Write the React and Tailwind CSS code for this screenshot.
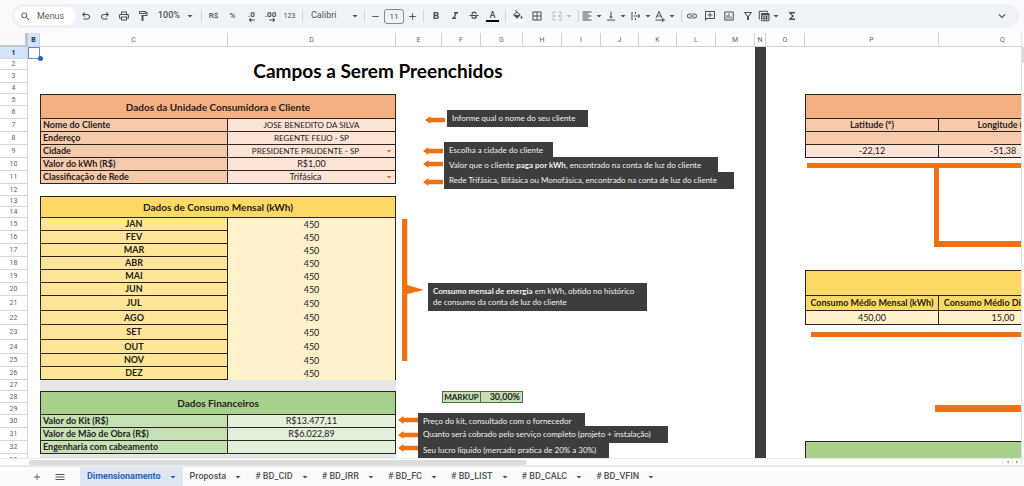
import React from 'react';
import {
  MdSearch, MdOutlinePrint, MdOutlineFormatPaint, MdFormatBold, MdFormatItalic, MdStrikethroughS,
  MdFormatColorFill, MdBorderAll, MdFormatAlignLeft, MdVerticalAlignBottom, MdLink,
  MdOutlineAddComment, MdInsertChartOutlined, MdOutlineFilterAlt, MdFunctions, MdArrowDropDown,
  MdKeyboardArrowDown, MdAdd, MdRemove, MdMenu,
} from 'react-icons/md';

/* ---------- toolbar ---------- */

function Tool({ label, className = 'w-[19px]', children }) {
  return (
    <button type="button" aria-label={label} className={`flex h-5 shrink-0 items-center justify-center ${className}`}>
      {children}
    </button>
  );
}

function Sep() {
  return <span className="flex w-1.5 shrink-0 justify-center"><span className="h-3 w-px bg-[#cfd3d9]" /></span>;
}

function Caret({ className = '' }) {
  return <MdArrowDropDown className={`size-3 shrink-0 ${className}`} />;
}

function UndoIcon({ className = '' }) {
  return (
    <svg viewBox="0 -960 960 960" fill="currentColor" className={`size-3 ${className}`}>
      <path d="M280-200v-80h284q63 0 109.500-40T720-420q0-60-46.500-100T564-560H312l104 104-56 56-200-200 200-200 56 56-104 104h252q97 0 169 63t72 157q0 94-72 157t-169 63H280Z" />
    </svg>
  );
}

function DecimalIcon({ digits, right }) {
  return (
    <span className="flex flex-col items-center">
      <span className="text-[8px] font-bold leading-[7px]">{digits}</span>
      <svg viewBox="0 0 10 6" className={`h-1 w-[7px] self-end ${right ? '-scale-x-100' : ''}`} fill="none" stroke="currentColor" strokeWidth="1.600">
        <path d="M10 3H2M4.500 .5 2 3l2.500 2.500" />
      </svg>
    </span>
  );
}

function MergeIcon() {
  return (
    <svg viewBox="0 0 24 24" className="size-3 shrink-0" fill="none" stroke="currentColor" strokeWidth="2">
      <path d="M9 4H4v4M15 4h5v4M9 20H4v-4M15 20h5v-4M2 12h6M22 12h-6" />
      <path d="m6 9 3 3-3 3M18 9l-3 3 3 3" />
    </svg>
  );
}

function OverflowIcon() {
  return (
    <svg viewBox="0 0 24 24" className="size-3 shrink-0" fill="none" stroke="currentColor" strokeWidth="2">
      <path d="M4 4v16M11 4v4M11 16v4M7 12h13M16 8l4 4-4 4" />
    </svg>
  );
}

function RotateIcon() {
  return (
    <svg viewBox="0 0 24 24" className="size-3 shrink-0" fill="none" stroke="currentColor" strokeWidth="2">
      <path d="M4 16 10 3l6 13M6 12h8M3 20h14M17 17v6l4-3z" />
    </svg>
  );
}

function TableViewsIcon() {
  return (
    <svg viewBox="0 0 24 24" className="size-3 shrink-0" fill="none" stroke="currentColor" strokeWidth="2">
      <path d="M4 18H2.500V2.500H19V5" />
      <path d="M7 7h15v14.500H7zM7 12h15M7 16.500h15M12 12v9.500M17 12v9.500" />
      <path d="M7 8.500h15" strokeWidth="3" />
    </svg>
  );
}

function Toolbar() {
  return (
    <div role="toolbar" className="mr-[5px] ml-3 flex h-6 items-center rounded-full bg-[#eff3f9] pr-2 pl-0.5 text-[9px] text-[#4d5054]">
      <label className="flex h-[18px] w-[62px] shrink-0 items-center gap-1.5 rounded-full bg-white pl-1.5">
        <MdSearch className="size-[11px] shrink-0" />
        <input aria-label="Menus" placeholder="Menus" className="w-9 bg-transparent leading-3 outline-none placeholder:text-[#5a5d61]" />
      </label>
      <Tool label="Desfazer"><UndoIcon /></Tool>
      <Tool label="Refazer"><UndoIcon className="-scale-x-100" /></Tool>
      <Tool label="Imprimir"><MdOutlinePrint className="size-3" /></Tool>
      <Tool label="Pintar formatação"><MdOutlineFormatPaint className="size-3" /></Tool>
      <Tool label="Zoom" className="w-[46px] gap-1 pl-1"><span className="font-medium">100%</span><Caret /></Tool>
      <Sep />
      <Tool label="Moeda"><span className="text-[8px] font-medium">R$</span></Tool>
      <Tool label="Porcentagem"><span className="text-[8px] font-medium">%</span></Tool>
      <Tool label="Diminuir casas decimais"><DecimalIcon digits=".0" /></Tool>
      <Tool label="Aumentar casas decimais"><DecimalIcon digits=".00" right /></Tool>
      <Tool label="Mais formatos"><span className="text-[7px]">123</span></Tool>
      <Sep />
      <Tool label="Fonte" className="w-14 justify-between! pl-1.5"><span>Calibri</span><Caret /></Tool>
      <Sep />
      <Tool label="Diminuir tamanho da fonte" className="w-[17px]"><MdRemove className="size-[11px]" /></Tool>
      <input aria-label="Tamanho da fonte" defaultValue="11" className="h-[15px] w-5 shrink-0 rounded-[3px] border border-[#85888c] bg-transparent text-center text-[8px] outline-none" />
      <Tool label="Aumentar tamanho da fonte" className="w-4"><MdAdd className="size-[11px]" /></Tool>
      <Sep />
      <Tool label="Negrito"><MdFormatBold className="size-3" /></Tool>
      <Tool label="Itálico"><MdFormatItalic className="size-3" /></Tool>
      <Tool label="Tachado"><MdStrikethroughS className="size-3" /></Tool>
      <Tool label="Cor do texto">
        <span className="flex flex-col items-center"><span className="font-medium leading-[9px]">A</span><span className="h-0.5 w-[13px] bg-black" /></span>
      </Tool>
      <Sep />
      <Tool label="Cor de preenchimento">
        <span className="flex flex-col items-center"><MdFormatColorFill className="h-3 w-3" /><span className="-mt-0.5 h-0.5 w-3 bg-white" /></span>
      </Tool>
      <Tool label="Bordas" className="w-5"><MdBorderAll className="size-3" /></Tool>
      <Tool label="Mesclar células" className="w-7 pl-1 text-[#b3b6ba]"><MergeIcon /><Caret /></Tool>
      <Sep />
      <Tool label="Alinhamento horizontal" className="w-6"><MdFormatAlignLeft className="size-3 shrink-0" /><Caret /></Tool>
      <Tool label="Alinhamento vertical" className="w-6"><MdVerticalAlignBottom className="size-3 shrink-0" /><Caret /></Tool>
      <Tool label="Ajuste de texto" className="w-[25px]"><OverflowIcon /><Caret /></Tool>
      <Tool label="Rotação de texto" className="w-6"><RotateIcon /><Caret /></Tool>
      <Sep />
      <Tool label="Inserir link" className="w-4"><MdLink className="size-3" /></Tool>
      <Tool label="Inserir comentário"><MdOutlineAddComment className="size-3 -scale-x-100" /></Tool>
      <Tool label="Inserir gráfico"><MdInsertChartOutlined className="size-3" /></Tool>
      <Tool label="Criar filtro"><MdOutlineFilterAlt className="size-3" /></Tool>
      <Tool label="Visualizações de tabela" className="w-[25px]"><TableViewsIcon /><Caret /></Tool>
      <Tool label="Funções"><MdFunctions className="size-3" /></Tool>
      <Tool label="Ocultar menus" className="ml-auto w-[19px]"><MdKeyboardArrowDown className="size-3.5" /></Tool>
    </div>
  );
}

/* ---------- sheet ---------- */

const COLUMNS = [
  ['B', 12], ['C', 188], ['D', 168], ['E', 46], ['F', 39], ['G', 42], ['H', 39], ['I', 39], ['J', 38],
  ['K', 38], ['L', 39], ['M', 39], ['N', 11], ['O', 39], ['P', 134], ['Q', 128],
];

const ROW_HEIGHTS = [
  12, 11, 13, 11, 12, 13, 13, 13, 13, 13, 13, 12, 11, 11, 13, 13, 13,
  13, 13, 13, 15, 14, 15, 14, 13, 13, 11, 12, 12, 13, 13, 13, 12,
];

const LINE = 'border-[#2b2420]';
const MONTHS = ['JAN', 'FEV', 'MAR', 'ABR', 'MAI', 'JUN', 'JUL', 'AGO', 'SET', 'OUT', 'NOV', 'DEZ'];

function Cell({ className = '', children, ...rest }) {
  return <td className={`overflow-hidden p-0 leading-[10px] whitespace-nowrap ${className}`} {...rest}>{children}</td>;
}

function SectionTitle({ color, children }) {
  return (
    <Cell colSpan={2} rowSpan={2} className={`border text-center text-[10px] font-bold ${LINE} ${color}`}>{children}</Cell>
  );
}

function FieldRow({ label, labelColor, valueColor, children }) {
  return (
    <>
      <Cell className={`border-x border-b pl-0.5 text-left font-bold ${LINE} ${labelColor}`}>{label}</Cell>
      <Cell className={`border-r border-b text-center ${LINE} ${valueColor}`}>{children}</Cell>
    </>
  );
}

function CellSelect({ label, value, textSize = 'text-[9px]' }) {
  return (
    <span className="flex h-[10px] items-center">
      <select aria-label={label} defaultValue={value} className={`h-[10px] min-w-0 flex-1 appearance-none bg-transparent p-0 text-center leading-[10px] outline-none [text-align-last:center] ${textSize}`}>
        <option>{value}</option>
      </select>
      <MdArrowDropDown className="size-3 shrink-0 text-[#e0702c]" />
    </span>
  );
}

const orange = { labelColor: 'bg-[#f7caac]', valueColor: 'bg-[#fbe4d5]' };
const green = { labelColor: 'bg-[#c5e0b3]', valueColor: 'bg-[#e2efd9]' };

const LEFT = {
  5: <SectionTitle color="bg-[#f4b083]">Dados da Unidade Consumidora e Cliente</SectionTitle>,
  6: null,
  7: <FieldRow label="Nome do Cliente" {...orange}><span className="text-[8px]">JOSE BENEDITO DA SILVA</span></FieldRow>,
  8: <FieldRow label="Endereço" {...orange}><span className="text-[8px]">REGENTE FEIJO - SP</span></FieldRow>,
  9: <FieldRow label="Cidade" {...orange}><CellSelect label="Cidade" value="PRESIDENTE PRUDENTE - SP" textSize="text-[8px]" /></FieldRow>,
  10: <FieldRow label="Valor do kWh (R$)" {...orange}>R$1,00</FieldRow>,
  11: <FieldRow label="Classificação de Rede" {...orange}><CellSelect label="Classificação de Rede" value="Trifásica" /></FieldRow>,
  13: <SectionTitle color="bg-[#ffd965]">Dados de Consumo Mensal (kWh)</SectionTitle>,
  14: null,
  27: <Cell colSpan={2} className="bg-[#e7e6e6]" />,
  28: <SectionTitle color="bg-[#a8d08d]">Dados Financeiros</SectionTitle>,
  29: null,
  30: <FieldRow label="Valor do Kit (R$)" {...green}>R$13.477,11</FieldRow>,
  31: <FieldRow label="Valor de Mão de Obra (R$)" {...green}>R$6.022,89</FieldRow>,
  32: <FieldRow label="Engenharia com cabeamento" {...green} />,
  33: <Cell colSpan={2} className="bg-[#e7e6e6]" />,
};

MONTHS.forEach((month, i) => {
  LEFT[15 + i] = (
    <>
      <Cell className={`border-x border-b bg-[#ffe598] text-center font-bold ${LINE}`}>{month}</Cell>
      <Cell className={`border-r bg-[#fff2cb] text-center ${LINE}`}>450</Cell>
    </>
  );
});

const RIGHT = {
  5: <SectionTitle color="bg-[#f4b083]" />,
  6: null,
  7: (
    <>
      <Cell className={`border-x border-b bg-[#f7caac] text-center font-bold ${LINE}`}>Latitude (°)</Cell>
      <Cell className={`border-b bg-[#f7caac] text-center font-bold ${LINE}`}>Longitude (°)</Cell>
    </>
  ),
  8: <Cell colSpan={2} className={`border-b border-l bg-[#f7caac] ${LINE}`} />,
  9: (
    <>
      <Cell className={`border-x border-b bg-[#fbe4d5] text-center ${LINE}`}>-22,12</Cell>
      <Cell className={`border-b bg-[#fbe4d5] text-center ${LINE}`}>-51,38</Cell>
    </>
  ),
  19: <SectionTitle color="bg-[#ffd965]" />,
  20: null,
  21: (
    <>
      <Cell className={`border-x border-b bg-[#ffd965] text-center font-bold ${LINE}`}>Consumo Médio Mensal (kWh)</Cell>
      <Cell className={`border-b bg-[#ffd965] text-center font-bold ${LINE}`}>Consumo Médio Diário (kWh)</Cell>
    </>
  ),
  22: (
    <>
      <Cell className={`border-x border-b bg-[#fff2cb] text-center ${LINE}`}>450,00</Cell>
      <Cell className={`border-b bg-[#fff2cb] text-center ${LINE}`}>15,00</Cell>
    </>
  ),
  32: <SectionTitle color="bg-[#a8d08d]" />,
  33: null,
};

function pick(map, n) {
  return n in map ? map[n] : <Cell colSpan={2} />;
}

function Body({ n }) {
  if (n === 2) {
    return (
      <>
        <Cell colSpan={10} rowSpan={2} className="text-center text-[19px] leading-6! font-bold text-black">Campos a Serem Preenchidos</Cell>
        <Cell />
      </>
    );
  }
  if (n === 3) return <Cell />;
  if (n === 28) {
    return (
      <>
        {pick(LEFT, n)}
        <Cell />
        <Cell className="border border-[#54684a] bg-[#c5e0b3] text-center text-[8px] font-bold">MARKUP</Cell>
        <Cell className="border-y border-r border-[#54684a] bg-[#c5e0b3] pr-0.5! text-right font-bold">30,00%</Cell>
        <Cell colSpan={6} />
      </>
    );
  }
  return <>{pick(LEFT, n)}<Cell colSpan={9} /></>;
}

function Grid() {
  return (
    <table className="w-[1067px] table-fixed border-separate border-spacing-0 font-[Lato,'Liberation_Sans',sans-serif] text-[9px] text-[#26211e]">
      <colgroup>
        <col className="w-7" />
        {COLUMNS.map(([name, width]) => <col key={name} style={{ width }} />)}
      </colgroup>
      <thead>
        <tr className="h-3.5 font-[Roboto,sans-serif] text-[7px] leading-[10px] text-[#5f6368]">
          <td className="border-r-[3px] border-b-2 border-[#c3c5c8] bg-[#f8f9fa] p-0" />
          {COLUMNS.map(([name]) => (
            <th
              key={name}
              scope="col"
              className={`border-r border-b border-[#cfd1d4] p-0 ${name === 'B' ? 'bg-[#d3e3fd] font-bold text-[#202d4a]' : 'bg-white font-normal'}`}
            >
              {name}
            </th>
          ))}
        </tr>
      </thead>
      <tbody>
        {ROW_HEIGHTS.map((height, i) => {
          const n = i + 1;
          return (
            <tr key={n} style={{ height }}>
              <th
                scope="row"
                className={`overflow-hidden border-r border-b border-[#d5d7da] p-0 font-[Roboto,sans-serif] text-[7px] leading-[8px] ${n === 1 ? 'bg-[#d3e3fd] font-bold text-[#202d4a]' : 'bg-white font-normal text-[#5f6368]'}`}
              >
                {n}
              </th>
              <Cell className={n === 1 ? 'border border-[#5b8bdc]' : ''} />
              <Body n={n} />
              {n === 1 && <Cell rowSpan={ROW_HEIGHTS.length} className="bg-[#3d3d3d]" />}
              <Cell />
              {pick(RIGHT, n)}
            </tr>
          );
        })}
      </tbody>
    </table>
  );
}

/* ---------- drawings floating over the sheet ---------- */

function Note({ className, children }) {
  return (
    <p className={`absolute flex items-center bg-[#3d3d3d] pl-[5px] whitespace-nowrap ${className}`}>
      <span>{children}</span>
    </p>
  );
}

function Arrow({ className }) {
  return (
    <svg viewBox="0 0 20 8" className={`absolute h-2 w-5 ${className}`} fill="#ee7214">
      <path d="M0 4 5.500 0v1.700H20v4.600H5.500V8z" />
    </svg>
  );
}

function Annotations() {
  return (
    <div className="font-[Lato,'Liberation_Sans',sans-serif] text-[8px] leading-[11px] text-[#f1f1f1]">
      <Arrow className="top-[83px] left-[425px]" />
      <Arrow className="top-[114px] left-[423px]" />
      <Arrow className="top-[127px] left-[423px]" />
      <Arrow className="top-[145px] left-[423px]" />
      <Arrow className="top-[383px] left-[398px]" />
      <Arrow className="top-[398px] left-[398px]" />
      <Arrow className="top-[411px] left-[398px]" />
      <Note className="top-[77px] left-[447px] h-[17px] w-[141px]">Informe qual o nome do seu cliente</Note>
      <Note className="top-[109px] left-[444px] h-4 w-[109px]">Escolha a cidade do cliente</Note>
      <Note className="top-[124px] left-[444px] h-4 w-[274px]">Valor que o cliente <b>paga por kWh</b>, encontrado na conta de luz do cliente</Note>
      <Note className="top-[139px] left-[444px] h-[17px] w-[290px]">Rede Trifásica, Bifásica ou Monofásica, encontrado na conta de luz do cliente</Note>
      <Note className="top-[250px] left-[428px] h-7 w-[219px]"><b>Consumo mensal de energia</b> em kWh, obtido no histórico<br />de consumo da conta de luz do cliente</Note>
      <Note className="top-[380px] left-[418px] h-4 w-[167px]">Preço do kit, consultado com o fornecedor</Note>
      <Note className="top-[393px] left-[418px] h-[17px] w-[250px]">Quanto será cobrado pelo serviço completo (projeto + instalação)</Note>
      <Note className="top-[409px] left-[418px] h-4 w-[191px]">Seu lucro líquido (mercado pratica de 20% a 30%)</Note>
      <svg viewBox="0 0 22 142" className="absolute top-[186px] left-[402px] h-[142px] w-[22px]" fill="#ee7214">
        <path d="M0 0h5.300v66l16.700 5-16.700 4v67H0z" />
      </svg>
      <svg viewBox="0 0 262 250" className="absolute top-[130px] left-[805px] h-[250px] w-[262px]" fill="#ee7214">
        <path d="M2 0h260v5H134v73h128v6H129V5H2zM6 169h256v5H6zM130 242h132v7H130z" />
      </svg>
      <span className="absolute top-[23px] left-[38px] size-[5px] rounded-full bg-[#1a5fc8]" />
    </div>
  );
}

/* ---------- sheet tabs ---------- */

const TABS = ['Dimensionamento', 'Proposta', '# BD_CID', '# BD_IRR', '# BD_FC', '# BD_LIST', '# BD_CALC', '# BD_VFIN'];

function SheetTabs() {
  return (
    <nav className="flex h-[19px] shrink-0 items-stretch bg-[#f9fbfd] pl-[27px] text-[9px] font-medium text-[#50545a]">
      <button type="button" aria-label="Adicionar página" className="flex w-5 items-center justify-center"><MdAdd className="size-2.5" /></button>
      <button type="button" aria-label="Todas as páginas" className="mr-2 flex w-[25px] items-center justify-center"><MdMenu className="size-3" /></button>
      {TABS.map((name, i) => (
        <button
          key={name}
          type="button"
          aria-current={i === 0 ? 'page' : undefined}
          className={`flex items-center gap-1.5 pr-1 pl-[7px] ${i === 0 ? 'bg-[#dfe6f2] font-bold text-[#2263c9]' : ''}`}
        >
          {name}<Caret />
        </button>
      ))}
    </nav>
  );
}

export default function App() {
  return (
    <div className="flex h-screen flex-col overflow-hidden bg-[#f9fbfd] pt-1 font-[Roboto,sans-serif]">
      <Toolbar />
      <main className="mt-[5px] flex min-h-0 flex-1 bg-white">
        <div className="relative min-w-0 flex-1 overflow-hidden">
          <Grid />
          <Annotations />
        </div>
        <div className="flex w-[3px] shrink-0 flex-col border-l border-[#e3e3e3] bg-white pt-3.5">
          <span className="h-4 w-full bg-[#dadce0]" />
        </div>
      </main>
      <div className="flex h-[9px] shrink-0 items-center border-y border-b-2 border-[#e8eaed] bg-white pl-[29px]">
        <span className="h-[5px] w-1/2 rounded-full bg-[#dadce0]" />
        <span className="mr-0.5 ml-auto flex items-center text-[#80868b]">
          <button type="button" aria-label="Rolar para a esquerda" className="flex w-2.5 justify-center border-l border-[#e3e3e3]"><MdArrowDropDown className="size-2 rotate-90" /></button>
          <button type="button" aria-label="Rolar para a direita" className="flex w-2.5 justify-center border-x border-[#e3e3e3]"><MdArrowDropDown className="size-2 -rotate-90" /></button>
        </span>
      </div>
      <SheetTabs />
    </div>
  );
}
